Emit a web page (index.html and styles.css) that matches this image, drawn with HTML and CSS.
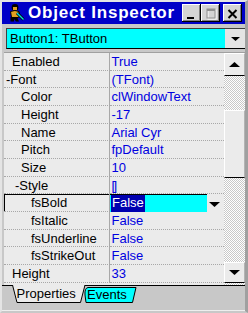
FILE: index.html
```html
<!DOCTYPE html>
<html lang="en">
<head>
    <meta charset="UTF-8">
    <title>Object Inspector</title>
    <link rel="stylesheet" href="styles.css">
</head>
<body>
    <div class="window">
        <div class="titlebar">
            <svg class="app-icon" viewBox="0 0 18 18" width="18" height="18">
                <circle cx="7" cy="3.5" r="3.4" fill="#000"/>
                <rect x="5" y="3" width="4" height="3" fill="#e0a020"/>
                <path d="M2.5 7.5 Q7 5.5 11 7.5 L12 12 L10 13.5 L3.5 13.5 Z" fill="#e0a020" stroke="#000" stroke-width="1"/>
                <path d="M9 9 L15.5 15.5" stroke="#000" stroke-width="3"/>
                <path d="M9 9 L15.5 15.5" stroke="#00e0e0" stroke-width="1.4"/>
                <path d="M2.5 13 L2.5 17.5 L6 17.5 L6 15 L8 17.5 L11 17.5 L9 13 Z" fill="#000"/>
            </svg>
            <span class="title">Object Inspector</span>
            <div class="caption-btns">
                <div class="cap-btn">
                    <svg viewBox="0 0 19 18" width="19" height="18"><rect x="5" y="13" width="7" height="2" fill="#000"/></svg>
                </div>
                <div class="cap-btn">
                    <svg viewBox="0 0 19 18" width="19" height="18">
                        <rect x="7" y="6" width="8" height="9" fill="none" stroke="#fff"/>
                        <rect x="6" y="5" width="8" height="9" fill="none" stroke="#909090"/>
                        <rect x="6" y="5" width="8" height="2" fill="#909090"/>
                    </svg>
                </div>
                <div class="cap-btn close">
                    <svg viewBox="0 0 19 18" width="19" height="18"><path d="M5.5 6 L13.5 14 M13.5 6 L5.5 14" stroke="#000" stroke-width="2"/></svg>
                </div>
            </div>
        </div>

        <div class="combo">
            <span class="combo-text">Button1: TButton</span>
            <span class="combo-btn">
                <svg viewBox="0 0 9 4" width="9" height="4"><path d="M0 0 H9 L4.5 4 Z" fill="#000"/></svg>
            </span>
        </div>

        <div class="grid">
            <div class="rows">
                <div class="row"><div class="name lv0">Enabled</div><div class="value">True</div></div>
                <div class="row"><div class="name ex0">-Font</div><div class="value">(TFont)</div></div>
                <div class="row"><div class="name lv1">Color</div><div class="value">clWindowText</div></div>
                <div class="row"><div class="name lv1">Height</div><div class="value">-17</div></div>
                <div class="row"><div class="name lv1">Name</div><div class="value">Arial Cyr</div></div>
                <div class="row"><div class="name lv1">Pitch</div><div class="value">fpDefault</div></div>
                <div class="row"><div class="name lv1">Size</div><div class="value">10</div></div>
                <div class="row"><div class="name ex1">-Style</div><div class="value set">[]</div></div>
                <div class="row sel">
                    <div class="name lv2">fsBold</div>
                    <div class="value">
                        <div class="editor"><span class="hl">False</span></div>
                        <svg class="drop" viewBox="0 0 11 5" width="11" height="5"><path d="M0 0 H11 L5.5 5 Z" fill="#000"/></svg>
                    </div>
                </div>
                <div class="row"><div class="name lv2">fsItalic</div><div class="value">False</div></div>
                <div class="row"><div class="name lv2">fsUnderline</div><div class="value">False</div></div>
                <div class="row"><div class="name lv2">fsStrikeOut</div><div class="value">False</div></div>
                <div class="row"><div class="name lv0">Height</div><div class="value">33</div></div>
            </div>
            <div class="scrollbar">
                <div class="sb-btn up">
                    <svg viewBox="0 0 11 5" width="11" height="5"><path d="M0 5 H11 L5.5 0 Z" fill="#000"/></svg>
                </div>
                <div class="sb-thumb"></div>
                <div class="sb-btn down">
                    <svg viewBox="0 0 11 5" width="11" height="5"><path d="M0 0 H11 L5.5 5 Z" fill="#000"/></svg>
                </div>
            </div>
        </div>

        <div class="tabbar">
            <div class="tab props">Properties</div>
            <div class="tab events">Events</div>
        </div>
    </div>
</body>
</html>
```

FILE: styles.css
```css
* {
    margin: 0;
    padding: 0;
    box-sizing: border-box;
}

body {
    font-family: 'Liberation Sans', Arial, sans-serif;
    font-size: 13px;
    background: #c8c8c8;
}

.window {
    width: 248px;
    height: 313px;
    background: #c8c8c8;
    border-top: 2px solid #e4e4e4;
    border-left: 2px solid #e4e4e4;
    border-right: 3px solid #a0a0a0;
    border-bottom: 2px solid #c8c8c8;
    display: flex;
    flex-direction: column;
}

/* caption */
.titlebar {
    height: 22px;
    background: #0000c8;
    display: flex;
    align-items: center;
    padding-left: 6px;
}

.app-icon {
    flex: none;
}

.title {
    color: #fff;
    font-weight: bold;
    font-size: 17px;
    letter-spacing: 0.8px;
    margin-left: 2px;
    white-space: nowrap;
}

.caption-btns {
    margin-left: auto;
    margin-right: 3px;
    display: flex;
}

.cap-btn {
    width: 19px;
    height: 18px;
    background: #d4d4d4;
    box-shadow: inset -1px -1px #000, inset 1px 1px #fff, inset -2px -2px #808080;
}

.cap-btn svg {
    display: block;
}

.cap-btn.close {
    margin-left: 3px;
}

/* component selector */
.combo {
    height: 21px;
    margin-top: 4px;
    margin-left: 4px;
    display: flex;
    border-top: 1px solid #404040;
    border-left: 1px solid #404040;
    border-bottom: 1px solid #000;
}

.combo-text {
    flex: 1;
    background: #00ffff;
    padding: 1px 0 0 3px;
    line-height: 18px;
    white-space: nowrap;
}

.combo-btn {
    width: 20px;
    background: #e4e4e4;
    display: flex;
    align-items: center;
    justify-content: center;
}

/* property grid */
.grid {
    height: 233px;
    margin-top: 3px;
    margin-left: 2px;
    border-top: 1px solid #a0a0a0;
    background: #ebebeb;
    display: flex;
}

.rows {
    flex: 1;
    display: flex;
    flex-direction: column;
}

.row {
    display: flex;
    height: 17.67px;
}

.name,
.value {
    padding-top: 1px;
    line-height: 15.67px;
    white-space: nowrap;
    border-bottom: 1px dotted #a8a8a8;
}

.name {
    width: 106px;
    color: #000;
    border-right: 1px solid #a8a8a8;
}

.lv0 { padding-left: 8px; }
.ex0 { padding-left: 2px; }
.lv1 { padding-left: 17px; }
.ex1 { padding-left: 11px; }
.lv2 { padding-left: 27px; }

.value {
    flex: 1;
    color: #0000e0;
    padding-left: 1.5px;
}

.value.set {
    letter-spacing: -1.5px;
}

.row.sel .name {
    box-shadow: inset 1px 1px #000;
}

.row.sel .value {
    padding: 0;
    border-bottom: none;
    display: flex;
    align-items: flex-start;
}

.editor {
    width: 97px;
    height: 17.67px;
    background: #00ffff;
    border-top: 1px solid #000;
    padding-left: 1px;
    line-height: 16.67px;
}

.hl {
    display: inline-block;
    background: #0000b0;
    color: #fff;
    padding: 0 1px 0 1px;
}

.drop {
    margin: 8px 0 0 2px;
}

/* scroll bar */
.scrollbar {
    width: 21px;
    display: flex;
    flex-direction: column;
    background-color: #fff;
    background-image: conic-gradient(#c8c8c8 25%, transparent 0 50%, #c8c8c8 0 75%, transparent 0);
    background-size: 2px 2px;
}

.sb-btn,
.sb-thumb {
    background: #ebebeb;
    border-top: 1px solid #fff;
    border-left: 1px solid #fff;
    border-right: 1px solid #b4b4b4;
    border-bottom: 1px solid #000;
}

.sb-btn {
    display: flex;
    align-items: center;
    justify-content: center;
}

.sb-btn.up {
    height: 23px;
}

.sb-thumb {
    height: 68px;
    margin-top: 34px;
}

.sb-btn.down {
    height: 21px;
    margin-top: auto;
    margin-bottom: 2px;
}

/* tabs */
.tabbar {
    height: 26px;
    border-top: 1px solid #000;
    border-bottom: 1px solid #eeeeee;
    display: flex;
    align-items: flex-start;
}

.tab {
    white-space: nowrap;
    background-repeat: no-repeat;
    background-size: 100% 100%;
}

.tab.props {
    width: 75px;
    height: 19px;
    margin-top: -1px;
    margin-left: 10px;
    padding: 1px 0 0 4.5px;
    line-height: 16px;
    background-image: url("data:image/svg+xml,%3Csvg xmlns='http://www.w3.org/2000/svg' viewBox='0 0 75 19' preserveAspectRatio='none'%3E%3Cpath d='M0.5 0 L5 17.5 L68.5 17.5 L73 0' fill='%23ebebeb' stroke='%23000'/%3E%3C/svg%3E");
}

.tab.events {
    width: 54px;
    height: 16px;
    margin-top: 1px;
    margin-left: -3px;
    padding-left: 3px;
    line-height: 15px;
    background-image: url("data:image/svg+xml,%3Csvg xmlns='http://www.w3.org/2000/svg' viewBox='0 0 54 16' preserveAspectRatio='none'%3E%3Cpath d='M4 0.5 Q0.5 1 1 8 L2 15.5 L48.5 15.5 L52 0.5 Z' fill='%2300ffff' stroke='%23000'/%3E%3C/svg%3E");
}
```
